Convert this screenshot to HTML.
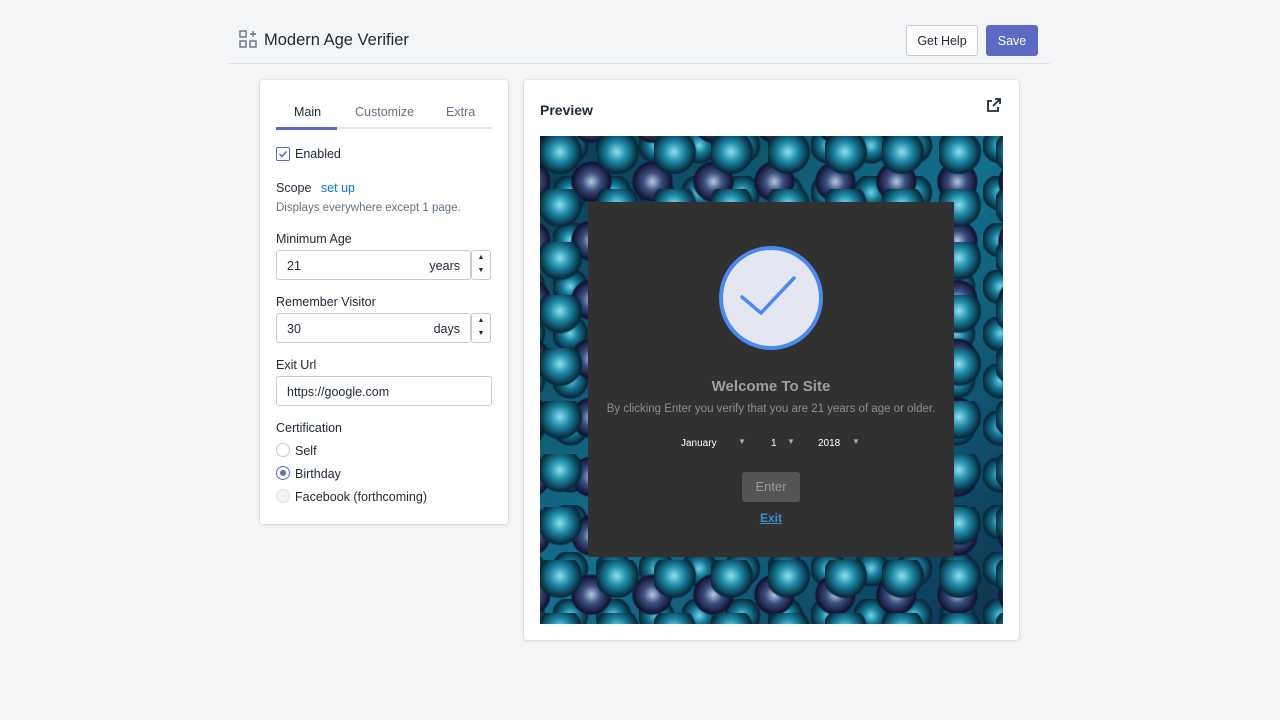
<!DOCTYPE html>
<html><head><style>
*{box-sizing:border-box;margin:0;padding:0}
body{width:1280px;height:720px;background:#f4f5f7;font-family:"Liberation Sans",sans-serif;color:#212b36;position:relative;overflow:hidden}
.hdr{position:absolute;left:228px;top:0;width:822px;height:64px;border-bottom:1px solid #dfe3e8}
.title{position:absolute;left:36px;top:31px;font-size:16.5px;color:#212b36}
.btn{position:absolute;top:25px;height:31px;border-radius:3px;font-size:12.5px;display:flex;align-items:center;justify-content:center}
.card{position:absolute;background:#fff;border-radius:3px;box-shadow:0 0 0 1px rgba(63,63,68,.05),0 1px 3px rgba(63,63,68,.15)}
.t{position:absolute;font-size:12.5px}
.inp{position:absolute;left:16px;width:216px;height:30px;border:1px solid #c4cdd5;border-radius:3px;font-size:12.5px}
.radio{position:absolute;left:16px;width:14px;height:14px;border:1px solid #c4cdd5;border-radius:50%}
.bg{position:absolute;left:16px;top:56px;width:463px;height:488px;background:
radial-gradient(circle at 35% 30%,#8fe0f0 0,#1e8aa8 10px,#06283a 21px,transparent 23px) 0 0/57px 53px,
radial-gradient(circle at 40% 35%,#b8c8e0 0,#3c4f80 9px,#121230 19px,transparent 21px) 27px 25px/61px 59px,
radial-gradient(circle at 40% 35%,#6fd6ea 0,#157a98 8px,#082838 17px,transparent 19px) 13px 40px/43px 47px,
linear-gradient(135deg,#0b3a50,#13708e 50%,#0d3550);}
</style></head><body>
<div class="hdr">
<svg style="position:absolute;left:11px;top:30px" width="18" height="18" viewBox="0 0 18 18" fill="none" stroke="#637381" stroke-width="1.4"><rect x="1" y="1" width="6" height="6"/><rect x="1" y="11" width="6" height="6"/><rect x="11" y="11" width="6" height="6"/><path d="M14 1v6M11 4h6"/></svg>
<div class="title">Modern Age Verifier</div>
<div class="btn" style="left:678px;width:72px;background:#fff;border:1px solid #c4cdd5;color:#212b36">Get Help</div>
<div class="btn" style="left:758px;width:52px;background:#5c6ac4;color:#fff">Save</div>
</div>
<div class="card" style="left:260px;top:80px;width:248px;height:444px">
<div class="t" style="left:34px;top:25px;color:#212b36">Main</div>
<div class="t" style="left:95px;top:25px;color:#637381">Customize</div>
<div class="t" style="left:186px;top:25px;color:#637381">Extra</div>
<div style="position:absolute;left:16px;top:47px;width:216px;height:2px;background:#dfe3e8"></div>
<div style="position:absolute;left:16px;top:47px;width:61px;height:3px;background:#5c6ac4"></div>
<div style="position:absolute;left:16px;top:67px;width:14px;height:14px;border:1px solid #5c6ac4;border-radius:2px"></div>
<svg style="position:absolute;left:18px;top:69px" width="10" height="10" viewBox="0 0 10 10"><path d="M1.5 5l2.5 2.5 4.5-5" fill="none" stroke="#5c6ac4" stroke-width="1.5"/></svg>
<div class="t" style="left:35px;top:67px">Enabled</div>
<div class="t" style="left:16px;top:101px">Scope <span style="color:#007ace;margin-left:6px">set up</span></div>
<div class="t" style="left:16px;top:122px;color:#637381;font-size:11.5px">Displays everywhere except 1 page.</div>
<div class="t" style="left:16px;top:152px">Minimum Age</div>
<div class="inp" style="top:170px;width:195px"><span style="position:absolute;left:10px;top:8px">21</span><span style="position:absolute;right:10px;top:8px">years</span></div>
<div class="inp" style="top:170px;left:211px;width:20px;font-size:7px;text-align:center;line-height:13px">▲<br>▼</div>
<div class="t" style="left:16px;top:215px">Remember Visitor</div>
<div class="inp" style="top:233px;width:195px"><span style="position:absolute;left:10px;top:8px">30</span><span style="position:absolute;right:10px;top:8px">days</span></div>
<div class="inp" style="top:233px;left:211px;width:20px;font-size:7px;text-align:center;line-height:13px">▲<br>▼</div>
<div class="t" style="left:16px;top:278px">Exit Url</div>
<div class="inp" style="top:296px"><span style="position:absolute;left:10px;top:8px">https://google.com</span></div>
<div class="t" style="left:16px;top:341px">Certification</div>
<div class="radio" style="top:363px"></div><div class="t" style="left:35px;top:364px">Self</div>
<div class="radio" style="top:386px;border-color:#5c6ac4"><div style="margin:3px;width:6px;height:6px;border-radius:50%;background:#5c6ac4"></div></div><div class="t" style="left:35px;top:387px">Birthday</div>
<div class="radio" style="top:409px;background:#f4f6f8;border-color:#dfe3e8"></div><div class="t" style="left:35px;top:410px">Facebook (forthcoming)</div>
</div>
<div class="card" style="left:524px;top:80px;width:495px;height:560px">
<div class="t" style="left:16px;top:22px;font-size:14px;font-weight:bold">Preview</div>
<svg style="position:absolute;left:463px;top:18px" width="14" height="14" viewBox="0 0 14 14" fill="none" stroke="#212b36" stroke-width="1.8"><path d="M8 1h5v5M13 1L6 8M11 9v4H1V3h4"/></svg>
<div class="bg"></div>
<div style="position:absolute;left:64px;top:122px;width:366px;height:355px;background:#313131">
<svg style="position:absolute;left:130px;top:42px" width="106" height="108" viewBox="0 0 106 108"><circle cx="53" cy="54" r="52" fill="#4a8af4"/><circle cx="53" cy="54" r="48" fill="#e4e7f2"/><path d="M24 68l19 16 33-35" transform="translate(0,-15)" fill="none" stroke="#4a8af4" stroke-width="3.5" stroke-linecap="round" stroke-linejoin="round"/></svg>
<div style="position:absolute;left:0;width:100%;top:176px;text-align:center;color:#9e9e9e;font-size:15px;font-weight:bold">Welcome To Site</div>
<div style="position:absolute;left:0;width:100%;top:201px;text-align:center;color:#8e8e8e;font-size:11.5px">By clicking Enter you verify that you are 21 years of age or older.</div>
<div style="position:absolute;left:93px;top:236px;color:#fff;font-size:10px">January</div>
<div style="position:absolute;left:150px;top:235px;color:#aaa;font-size:8px">▼</div>
<div style="position:absolute;left:183px;top:236px;color:#fff;font-size:10px">1</div>
<div style="position:absolute;left:199px;top:235px;color:#aaa;font-size:8px">▼</div>
<div style="position:absolute;left:230px;top:236px;color:#fff;font-size:10px">2018</div>
<div style="position:absolute;left:264px;top:235px;color:#aaa;font-size:8px">▼</div>
<div style="position:absolute;left:154px;top:270px;width:58px;height:30px;background:#555558;border-radius:3px;color:#9a9a9a;font-size:13px;text-align:center;line-height:30px">Enter</div>
<div style="position:absolute;left:0;width:100%;top:309px;text-align:center;color:#3a8fc6;font-size:12px;font-weight:bold;text-decoration:underline">Exit</div>
</div>
</div>
</body></html>
